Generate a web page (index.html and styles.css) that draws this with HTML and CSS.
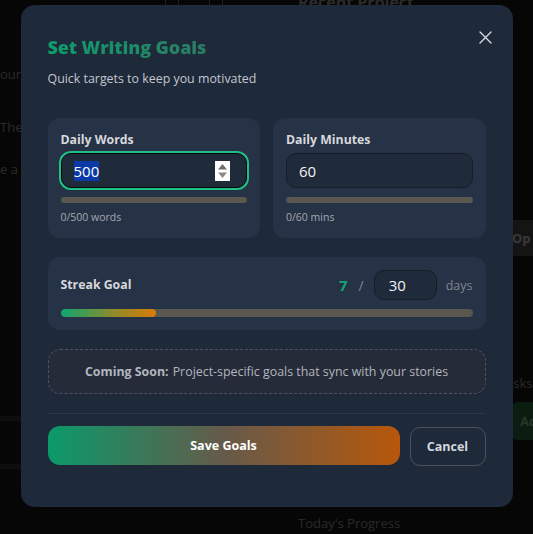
FILE: index.html
```html
<!DOCTYPE html>
<html lang="en">
<head>
<meta charset="utf-8">
<title>Set Writing Goals</title>
<link rel="stylesheet" href="styles.css">
</head>
<body>
<div class="app">
  <div class="app-left">
    <div class="app-top-icons"><span class="ico"></span><span class="ico"></span></div>
    <p class="bg-line l1">our writing streak</p>
    <p class="bg-line l2">They keep</p>
    <p class="bg-line l3">e a chapter</p>
    <div class="bg-strip s1"></div>
    <div class="bg-strip s2"></div>
  </div>
  <div class="app-right">
    <h3 class="bg-heading">Recent Project</h3>
    <div class="bg-open">Op</div>
    <p class="bg-tasks">asks</p>
    <div class="bg-add">Ad</div>
    <p class="bg-progress">Today's Progress</p>
  </div>
</div>

<div class="overlay">
  <div class="modal" role="dialog" aria-labelledby="goals-title">
    <button class="close" aria-label="Close">
      <svg width="13" height="13" viewBox="0 0 13 13"><path d="M1 1 L12 12 M12 1 L1 12" stroke="#d6dae0" stroke-width="1.4" stroke-linecap="round"/></svg>
    </button>
    <h2 class="title" id="goals-title">Set Writing Goals</h2>
    <p class="subtitle">Quick targets to keep you motivated</p>

    <div class="cards">
      <div class="card">
        <label class="label">Daily Words</label>
        <div class="field focused">
          <span class="sel">500</span>
          <span class="spinner">
            <svg width="15" height="20" viewBox="0 0 15 20"><rect width="15" height="20" fill="#ffffff"/><path d="M7.5 3 L12 8.5 L3 8.5 Z" fill="#6f6f6f"/><path d="M7.5 17 L12 11.5 L3 11.5 Z" fill="#8a8a8a"/></svg>
          </span>
        </div>
        <div class="bar"><div class="bar-fill" style="width:0%"></div></div>
        <p class="hint">0/500 words</p>
      </div>
      <div class="card">
        <label class="label">Daily Minutes</label>
        <div class="field"><span>60</span></div>
        <div class="bar"><div class="bar-fill" style="width:0%"></div></div>
        <p class="hint">0/60 mins</p>
      </div>
    </div>

    <div class="card streak">
      <div class="streak-row">
        <span class="label">Streak Goal</span>
        <div class="streak-right">
          <span class="current">7</span>
          <span class="slash">/</span>
          <div class="field small"><span>30</span></div>
          <span class="days">days</span>
        </div>
      </div>
      <div class="bar thick"><div class="bar-fill grad" style="width:23.3%"></div></div>
    </div>

    <div class="soon"><strong>Coming Soon:</strong> Project-specific goals that sync with your stories</div>

    <div class="divider"></div>

    <div class="actions">
      <button class="btn save">Save Goals</button>
      <button class="btn cancel">Cancel</button>
    </div>
  </div>
</div>
</body>
</html>
```

FILE: styles.css
```css
* { box-sizing: border-box; }
html, body { margin: 0; padding: 0; }
body {
  width: 533px;
  height: 534px;
  overflow: hidden;
  background: #1a1a1a;
  font-family: "Open Sans", "Noto Sans", "Liberation Sans", sans-serif;
  position: relative;
}

/* underlying app */
.app {
  display: grid;
  grid-template-columns: 298px 1fr;
  height: 534px;
  overflow: hidden;
  color: #aaaaaa;
}
.app-left { overflow: hidden; }
.app-top-icons { display: flex; gap: 30px; margin-left: 165px; height: 10px; }
.ico { width: 14px; height: 6px; border: 1px solid #888; border-top: none; }
.bg-line { margin: 0; font-size: 13px; white-space: nowrap; }
.l1 { margin-top: 55px; }
.l2 { margin-top: 35px; }
.l3 { margin-top: 24px; }
.bg-strip { height: 5px; background: #3a3a3a; width: 230px; }
.s1 { margin-top: 238px; }
.s2 { margin-top: 43px; }
.app-right { overflow: hidden; }
.bg-heading { margin: -9px 0 0 0; font-size: 16px; font-weight: 700; color: #b0b0b0; white-space: nowrap; }
.bg-open { margin: 207px 0 0 212px; width: 30px; height: 36px; background: #555; color: #e8e8e8; font-weight: 700; font-size: 13px; line-height: 36px; padding-left: 2px; }
.bg-tasks { margin: 118px 0 0 208px; font-size: 13px; }
.bg-add { margin: 10px 0 0 214px; width: 30px; height: 38px; background: #2f7a48; color: #9ee0b0; font-weight: 700; font-size: 13px; line-height: 38px; padding-left: 8px; border-radius: 6px 0 0 6px; }
.bg-progress { margin: 74px 0 0 0; font-size: 13px; }

/* overlay */
.overlay {
  position: fixed;
  inset: 0;
  background: rgba(0, 0, 0, 0.76);
  display: flex;
  justify-content: center;
  align-items: flex-start;
  padding-top: 5px;
}
.modal {
  position: relative;
  width: 492px;
  height: 502px;
  background: #1e293a;
  border-radius: 14px;
  padding: 30px 27px 0 27px;
}
.close {
  position: absolute;
  top: 26px;
  right: 21px;
  width: 13px;
  height: 13px;
  padding: 0;
  border: none;
  background: none;
  display: flex;
}
.title {
  margin: 0;
  font-size: 18px;
  line-height: 24px;
  font-weight: 800;
  letter-spacing: -0.1px;
  background: linear-gradient(90deg, #0e9d6c 0%, #2b7c62 100%);
  -webkit-background-clip: text;
  background-clip: text;
  color: transparent;
  width: max-content;
}
.subtitle {
  margin: 11px 0 0 0;
  font-size: 12.4px;
  line-height: 18px;
  color: #c3c7cf;
}

.cards {
  margin-top: 30px;
  display: grid;
  grid-template-columns: 1fr 1fr;
  gap: 13px;
}
.card {
  background: #263246;
  border-radius: 12px;
  padding: 13px 13px 13px 13px;
  display: flex;
  flex-direction: column;
}
.label {
  font-size: 12.3px;
  line-height: 18px;
  font-weight: 700;
  color: #d6d8dc;
}
.field {
  margin-top: 4px;
  height: 35px;
  background: #1f2a3b;
  border: 1px solid #171d27;
  border-radius: 10px;
  display: flex;
  align-items: center;
  padding-left: 12px;
  font-size: 15px;
  color: #f2f3f5;
}
.field.focused {
  border: 1px solid #050607;
  box-shadow: 0 0 0 2px #1fbf85;
  padding-left: 12px;
  padding-right: 16px;
  justify-content: space-between;
}
.sel {
  background: #0b3aa6;
  color: #ffffff;
  line-height: 20px;
}
.spinner { display: flex; }
.bar {
  margin-top: 9px;
  height: 6px;
  background: #5a5650;
  border-radius: 3px;
  overflow: hidden;
}
.bar.thick { height: 8px; border-radius: 4px; }
.bar-fill { height: 100%; border-radius: inherit; }
.bar-fill.grad { background: linear-gradient(90deg, #10a472 0%, #8c8c2a 55%, #db7a0a 100%); }
.hint {
  margin: 7px 0 0 0;
  font-size: 10.5px;
  line-height: 15px;
  color: #a4a8b0;
}

.streak {
  margin-top: 19px;
  padding-top: 13px;
}
.streak-row {
  display: flex;
  align-items: center;
  justify-content: space-between;
  height: 30px;
}
.streak-right { display: flex; align-items: center; gap: 9px; }
.current { font-size: 15px; font-weight: 700; color: #14a673; }
.slash { font-size: 14px; color: #7d828c; margin: 0 1px 0 2px; }
.field.small {
  margin-top: 0;
  width: 63px;
  height: 30px;
  padding-left: 14px;
  background: #1f2a3b;
}
.days { font-size: 12.5px; color: #80858f; }

.soon {
  margin-top: 19px;
  height: 45px;
  border: 1px dashed #4c5362;
  border-radius: 12px;
  background: #252b38;
  display: flex;
  align-items: center;
  justify-content: center;
  font-size: 12.4px;
  color: #b2b6be;
}
.soon strong { font-weight: 700; margin-right: 4px; }

.divider {
  margin-top: 19px;
  border-top: 1px solid #2e3747;
}
.actions {
  margin-top: 12px;
  display: flex;
  gap: 10px;
  align-items: flex-start;
}
.btn {
  font-family: inherit;
  font-size: 12.5px;
  font-weight: 700;
  cursor: pointer;
}
.save {
  flex: 1;
  height: 39px;
  border: none;
  border-radius: 12px;
  background: linear-gradient(90deg, #0b9a6a 0%, #665a4a 50%, #b8570b 100%);
  color: #ffffff;
}
.cancel {
  width: 76px;
  height: 39px;
  margin-top: 1px;
  background: transparent;
  border: 1px solid #4d535d;
  border-radius: 10px;
  color: #d4d8de;
}
```
